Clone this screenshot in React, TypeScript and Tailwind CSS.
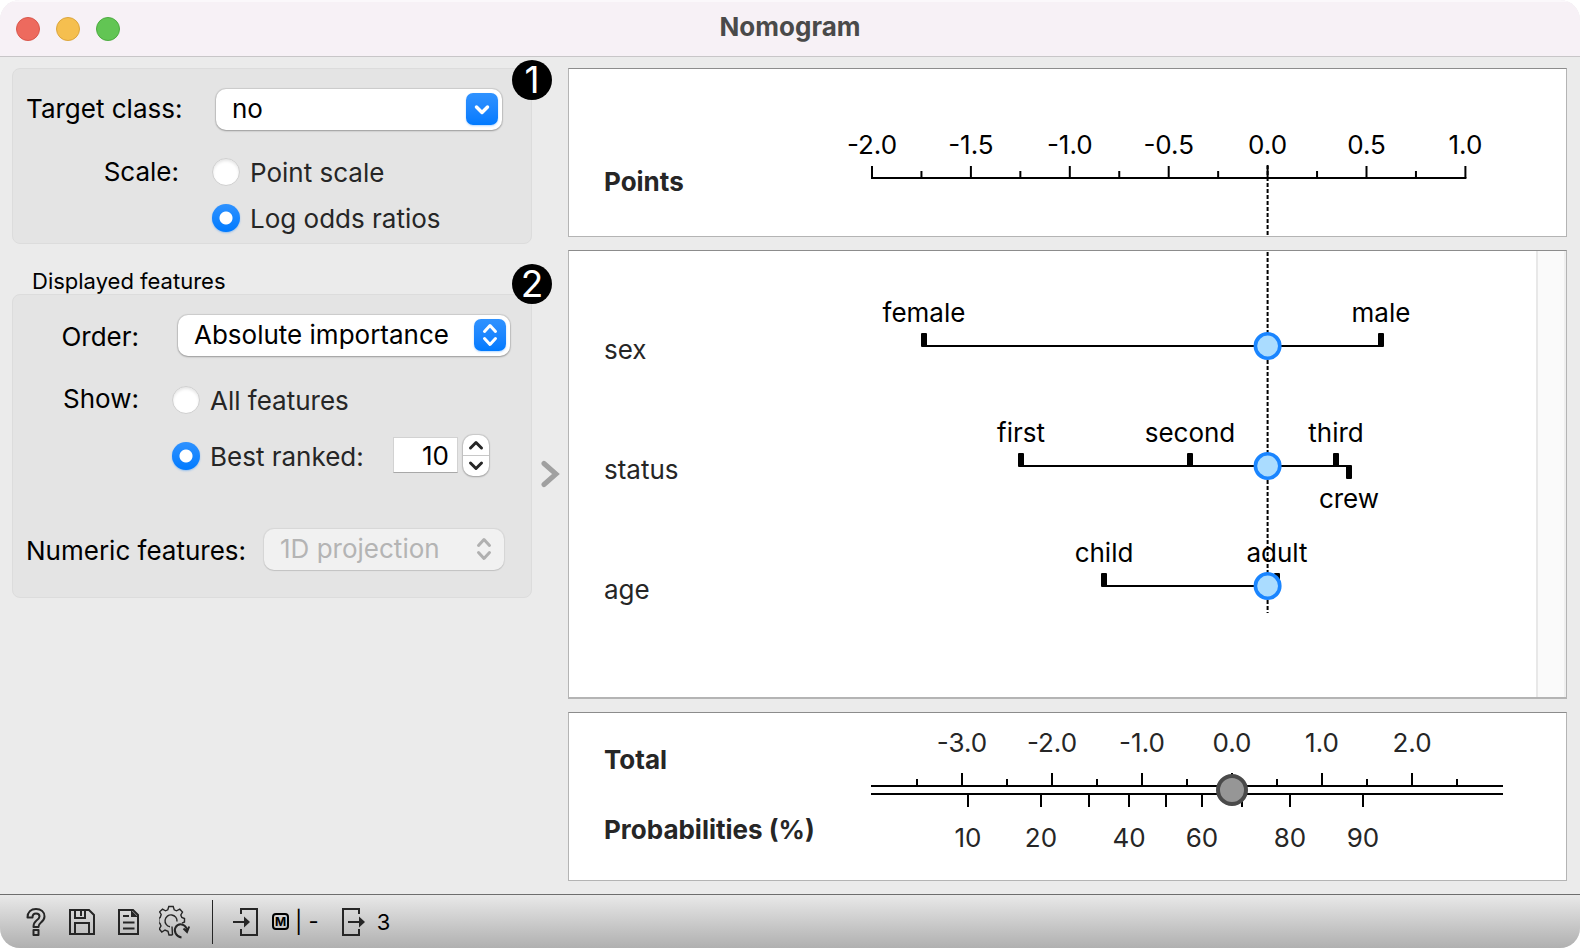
import { useState } from 'react';
import type { ReactNode } from 'react';

type Tick = { at: number; label?: string };
type Level = { at: number; label: string; below?: boolean };
type Feature = { name: string; y: number; levels: Level[] };

const ZERO_X = 698.6;
const UNIT = 197.8;

const pointTicks: Tick[] = [
  { at: -2, label: '-2.0' },
  { at: -1.75 },
  { at: -1.5, label: '-1.5' },
  { at: -1.25 },
  { at: -1, label: '-1.0' },
  { at: -0.75 },
  { at: -0.5, label: '-0.5' },
  { at: -0.25 },
  { at: 0, label: '0.0' },
  { at: 0.25 },
  { at: 0.5, label: '0.5' },
  { at: 0.75 },
  { at: 1, label: '1.0' },
];

const features: Feature[] = [
  {
    name: 'sex',
    y: 95,
    levels: [
      { at: 355, label: 'female' },
      { at: 812, label: 'male' },
    ],
  },
  {
    name: 'status',
    y: 215,
    levels: [
      { at: 452, label: 'first' },
      { at: 621, label: 'second' },
      { at: 767, label: 'third' },
      { at: 780, label: 'crew', below: true },
    ],
  },
  {
    name: 'age',
    y: 335,
    levels: [
      { at: 535, label: 'child' },
      { at: 708, label: 'adult' },
    ],
  },
];

const totalTicks: Tick[] = [
  { at: 348 },
  { at: 393, label: '-3.0' },
  { at: 438 },
  { at: 483, label: '-2.0' },
  { at: 528 },
  { at: 573, label: '-1.0' },
  { at: 618 },
  { at: 663, label: '0.0' },
  { at: 708 },
  { at: 753, label: '1.0' },
  { at: 798 },
  { at: 843, label: '2.0' },
  { at: 888 },
];

const probabilityTicks: Tick[] = [
  { at: 399, label: '10' },
  { at: 472, label: '20' },
  { at: 520 },
  { at: 560, label: '40' },
  { at: 597 },
  { at: 633, label: '60' },
  { at: 673 },
  { at: 721, label: '80' },
  { at: 794, label: '90' },
];

function PointsChart() {
  const x = (v: number) => ZERO_X + v * UNIT;
  return (
    <svg className="block h-full w-full text-[26px]" role="img" aria-label="Points scale">
      <text x="35" y="122" className="fill-[#262626] font-bold">Points</text>
      <path d={`M${x(-2) - 1} 109H${x(1) + 1}`} stroke="#000" strokeWidth="2" />
      {pointTicks.map((t) => (
        <g key={t.at}>
          <path d={`M${x(t.at)} 109V${t.label ? 97 : 102}`} stroke="#000" strokeWidth="2" />
          {t.label && <text x={x(t.at)} y="85" textAnchor="middle">{t.label}</text>}
        </g>
      ))}
      <path d={`M${x(0)} 96V166`} stroke="#000" strokeWidth="2" strokeDasharray="4 2" />
    </svg>
  );
}

function FeaturesChart() {
  return (
    <svg className="block h-full min-w-0 flex-1 text-[26px]" role="img" aria-label="Feature contributions">
      {features.map((f) => (
        <g key={f.name}>
          <text x="35" y={f.y + 13} className="fill-[#262626]">{f.name}</text>
          <path
            d={`M${f.levels[0].at - 2} ${f.y}H${f.levels[f.levels.length - 1].at + 2}`}
            stroke="#000"
            strokeWidth="2"
          />
          {f.levels.map((l) => (
            <g key={l.label}>
              <rect x={l.at - 3} y={l.below ? f.y - 1 : f.y - 13} width="6" height="14" rx="1" />
              <text x={l.at} y={l.below ? f.y + 42 : f.y - 24} textAnchor="middle">{l.label}</text>
            </g>
          ))}
        </g>
      ))}
      <path d={`M${ZERO_X} 1V362`} stroke="#000" strokeWidth="2" strokeDasharray="4 2" />
      {features.map((f) => (
        <circle key={f.name} cx={ZERO_X} cy={f.y} r="12.2" fill="#aadcff" stroke="#1a85ff" strokeWidth="3.6" />
      ))}
    </svg>
  );
}

function TotalChart() {
  return (
    <svg className="block h-full w-full fill-[#262626] text-[26px]" role="img" aria-label="Total and probabilities">
      <text x="35" y="56" className="font-bold">Total</text>
      <text x="35" y="126" className="font-bold">Probabilities (%)</text>
      <path d="M302 73H934M302 81H934" stroke="#000" strokeWidth="2" />
      {totalTicks.map((t) => (
        <g key={t.at}>
          <path d={`M${t.at} 73V${t.label ? 60 : 66}`} stroke="#000" strokeWidth="2" />
          {t.label && <text x={t.at} y="39" textAnchor="middle">{t.label}</text>}
        </g>
      ))}
      {probabilityTicks.map((t) => (
        <g key={t.at}>
          <path d={`M${t.at} 81V94`} stroke="#000" strokeWidth="2" />
          {t.label && <text x={t.at} y="134" textAnchor="middle">{t.label}</text>}
        </g>
      ))}
      <circle cx="663" cy="77" r="14" fill="#969696" stroke="#4a4a4a" strokeWidth="4" />
    </svg>
  );
}

function UpDown({ stroke }: { stroke: string }) {
  return (
    <svg width="32" height="32" fill="none" stroke={stroke} strokeWidth="3" strokeLinecap="round" strokeLinejoin="round">
      <path d="M10.5 12.5L16 6.5L21.5 12.5M10.5 19.5L16 25.5L21.5 19.5" />
    </svg>
  );
}

function Badge({ children }: { children: ReactNode }) {
  return (
    <span className="absolute -right-[21px] flex size-10 items-center justify-center rounded-full bg-black text-[37px] text-white">
      {children}
    </span>
  );
}

const radioClass =
  'size-7 shrink-0 appearance-none rounded-full border border-[#cfcfcf] bg-white shadow-[inset_0_2px_3px_rgba(0,0,0,0.10)] checked:border-0 checked:bg-[radial-gradient(circle,#fff_0,#fff_6px,transparent_7px),linear-gradient(#2f92ff,#007aff)] checked:shadow-[0_1px_2px_rgba(0,122,255,0.35)]';

const selectClass =
  'h-[41px] w-full appearance-none rounded-[10px] bg-white pb-0.5 pl-4 text-black shadow-[0_0_1px_1px_rgba(0,0,0,0.10),0_1px_2px_rgba(0,0,0,0.25)] disabled:bg-[#f1f1f1] disabled:text-[#b4b4b4] disabled:opacity-100 disabled:shadow-[0_0_1px_1px_rgba(0,0,0,0.06),0_1px_1px_rgba(0,0,0,0.10)]';

const arrowClass =
  'pointer-events-none absolute top-1 right-1 size-8 rounded-[7px] bg-gradient-to-b from-[#2f92ff] to-[#007aff] shadow-[0_1px_2px_rgba(0,122,255,0.3)]';

const panelClass = 'border border-[#b4b4b4] border-t-[#8c8c8c] bg-white overflow-hidden';
const groupClass = 'relative rounded-[8px] border border-[#dcdcdc] bg-[#e4e4e4]';

export default function App() {
  const [scale, setScale] = useState('log');
  const [show, setShow] = useState('best');
  const [count, setCount] = useState(10);

  return (
    <div className="h-screen bg-white font-['Inter','Liberation_Sans',sans-serif]">
      <div className="flex h-full flex-col overflow-hidden rounded-[20px] bg-[#ebebeb] text-[26px] leading-8 text-black">
        <header className="grid h-[57px] shrink-0 grid-cols-[1fr_auto_1fr] items-center border-t-2 border-b border-t-[#fbf8fb] border-b-[#c8c6c8] bg-[#f7f1f6] px-4">
          <div className="flex gap-4">
            <button aria-label="Close" className="size-6 rounded-full border border-[#d9574c] bg-[#ed6a5e]" />
            <button aria-label="Minimize" className="size-6 rounded-full border border-[#dba53c] bg-[#f5bf4f]" />
            <button aria-label="Zoom" className="size-6 rounded-full border border-[#4dab40] bg-[#62c554]" />
          </div>
          <h1 className="pb-1 text-[26px] leading-8 font-bold text-[#4a4a4a]">Nomogram</h1>
        </header>

        <main className="flex min-h-0 flex-1 pt-[11px] pr-[13px] pb-[13px] pl-3">
          <div className="w-[520px] shrink-0">
            <section className={`${groupClass} pt-5 pb-0.5 pl-[13px]`}>
              <div className="absolute -top-[9px] right-0"><Badge>1</Badge></div>
              <div className="grid grid-cols-[153px_1fr] gap-x-[33px]">
                <label htmlFor="target" className="self-center pb-0.5 text-right whitespace-nowrap">Target class:</label>
                <div className="relative mr-[29px] ml-1">
                  <select id="target" className={selectClass} defaultValue="no">
                    <option value="no">no</option>
                    <option value="yes">yes</option>
                  </select>
                  <span className={arrowClass}>
                    <svg width="32" height="32" fill="none" stroke="#fff" strokeWidth="3.5" strokeLinecap="round" strokeLinejoin="round">
                      <path d="M10.5 14L16 19.5L21.5 14" />
                    </svg>
                  </span>
                </div>
              </div>
              <div role="radiogroup" aria-labelledby="scale" className="mt-[19px] grid grid-cols-[153px_1fr] gap-x-[33px]">
                <span id="scale" className="flex h-[46px] items-center justify-end">Scale:</span>
                <div>
                  <label className="flex h-[46px] items-center gap-2.5 text-[#262626]">
                    <input type="radio" name="scale" className={radioClass} checked={scale === 'point'} onChange={() => setScale('point')} />
                    <span className="pt-0.5">Point scale</span>
                  </label>
                  <label className="flex h-[46px] items-center gap-2.5 text-[#262626]">
                    <input type="radio" name="scale" className={radioClass} checked={scale === 'log'} onChange={() => setScale('log')} />
                    <span className="pt-0.5">Log odds ratios</span>
                  </label>
                </div>
              </div>
            </section>

            <h2 className="mt-6 pl-5 text-[22px] leading-[26px]">Displayed features</h2>
            <section className={`${groupClass} pt-5 pb-[27px] pl-[13px]`}>
              <div className="absolute -top-[31px] right-0"><Badge>2</Badge></div>
              <div className="grid grid-cols-[113px_1fr] gap-x-[33px]">
                <label htmlFor="order" className="self-center pt-0.5 text-right">Order:</label>
                <div className="relative mr-[21px] ml-1.5">
                  <select id="order" className={selectClass} defaultValue="abs">
                    <option value="abs">Absolute importance</option>
                    <option value="name">Name</option>
                  </select>
                  <span className={arrowClass}><UpDown stroke="#fff" /></span>
                </div>
              </div>
              <div role="radiogroup" aria-labelledby="show" className="mt-4 grid grid-cols-[113px_1fr] gap-x-[33px]">
                <span id="show" className="flex h-14 items-center justify-end pb-0.5">Show:</span>
                <div>
                  <label className="flex h-14 items-center gap-2.5 text-[#262626]">
                    <input type="radio" name="show" className={radioClass} checked={show === 'all'} onChange={() => setShow('all')} />
                    <span className="pt-0.5">All features</span>
                  </label>
                  <div className="flex h-14 items-center justify-between pr-[42px]">
                    <label className="flex items-center gap-2.5 text-[#262626]">
                      <input type="radio" name="show" className={radioClass} checked={show === 'best'} onChange={() => setShow('best')} />
                      <span className="pt-0.5">Best ranked:</span>
                    </label>
                    <div className="flex items-center gap-[5px] pb-0.5">
                      <input
                        aria-label="Number of ranked features"
                        className="h-9 w-[65px] border border-[#d2d2d2] border-b-[#a8a8a8] bg-white pr-2 text-right"
                        value={count}
                        onChange={(e) => setCount(Number(e.target.value) || 0)}
                      />
                      <div className="flex h-[41px] w-[26px] flex-col divide-y divide-[#c8c8c8] overflow-hidden rounded-[10px] bg-white shadow-[0_0_1px_1px_rgba(0,0,0,0.12),0_1px_2px_rgba(0,0,0,0.2)]">
                        <button aria-label="Increase" className="flex-1" onClick={() => setCount(count + 1)}>
                          <svg width="26" height="20" fill="none" stroke="#262626" strokeWidth="3" strokeLinecap="round" strokeLinejoin="round">
                            <path d="M7.5 13L13 7.5L18.5 13" />
                          </svg>
                        </button>
                        <button aria-label="Decrease" className="flex-1" onClick={() => setCount(Math.max(0, count - 1))}>
                          <svg width="26" height="20" fill="none" stroke="#262626" strokeWidth="3" strokeLinecap="round" strokeLinejoin="round">
                            <path d="M7.5 7L13 12.5L18.5 7" />
                          </svg>
                        </button>
                      </div>
                    </div>
                  </div>
                </div>
              </div>
              <div className="mt-[45px] flex items-center gap-[18px] pr-[27px]">
                <label htmlFor="numeric" className="pt-0.5 whitespace-nowrap">Numeric features:</label>
                <div className="relative flex-1">
                  <select id="numeric" className={selectClass} disabled>
                    <option>1D projection</option>
                  </select>
                  <span className="pointer-events-none absolute top-1 right-1"><UpDown stroke="#b0b0b0" /></span>
                </div>
              </div>
            </section>
          </div>

          <div className="flex w-9 shrink-0 items-center justify-center pb-0.5">
            <button aria-label="Toggle controls">
              <svg width="20" height="28" fill="none" stroke="#a0a0a0" strokeWidth="5" strokeLinecap="round">
                <path d="M4 3.5L16 14L4 24.5" strokeLinejoin="miter" />
              </svg>
            </button>
          </div>

          <div className="flex min-w-0 flex-1 flex-col gap-[13px]">
            <section className={`${panelClass} h-[169px] shrink-0`}><PointsChart /></section>
            <section className={`${panelClass} flex min-h-0 flex-1 border-b-2`}>
              <FeaturesChart />
              <div className="w-[30px] shrink-0 border-r-2 border-l-2 border-r-[#efefef] border-l-[#e8e8e8] bg-[#fafafa]" />
            </section>
            <section className={`${panelClass} h-[169px] shrink-0`}><TotalChart /></section>
          </div>
        </main>

        <footer className="flex h-[54px] shrink-0 items-center border-t border-[#6e6e6e] bg-gradient-to-b from-[#e9e9e9] to-[#b0b0b0] pl-[25px] text-[22px]">
          <div className="flex items-center gap-[18px]">
            <button aria-label="Help">
              <svg width="24" height="30" viewBox="0 0 24 30" fill="none" stroke="#262626" strokeWidth="2" strokeLinejoin="round">
                <path d="M2.500 10.500C2.500 5 6 2 11 2C16 2 19.500 5 19.500 9.500C19.500 12.500 17.500 14.500 15.500 16C13.800 17.300 13.500 18 13.500 20H8.500C8.500 16.500 9.500 15 11.500 13.500C13.500 12 14.500 11 14.500 9.500C14.500 7.500 13 6.500 11 6.500C8.500 6.500 7.500 8 7.500 10.500ZM8.500 23H13.500V28H8.500Z" />
              </svg>
            </button>
            <button aria-label="Save">
              <svg width="30" height="30" viewBox="0 0 30 30" fill="none" stroke="#262626" strokeWidth="2">
                <path d="M3 3H22L27 8V27H3ZM8 3V11H18V3M14 4V9M8 27V16H22V27" />
              </svg>
            </button>
            <button aria-label="Report">
              <svg width="26" height="30" viewBox="0 0 26 30" fill="none" stroke="#262626" strokeWidth="2">
                <path d="M4 3H18L23 8V27H4ZM8 9H14M8 15.500H19.500M8 21.500H19.500" />
                <path d="M16 3V10H23Z" fill="#262626" stroke="none" />
              </svg>
            </button>
            <button aria-label="Reset settings">
              <svg width="33" height="34" viewBox="1 0 33 34" fill="none" stroke="#262626" strokeWidth="1.400">
                <g transform="translate(-1 0)">
                  <path d="M15.500 30L12 30L11 26.300L8 25L4.800 27L2.300 24L4 21L3 18.500L1.800 17.500V13.500L3.200 12.500L4.200 9.500L2.600 6.800L5.500 4.200L8.500 5.800L10.800 4.800L11.800 1.500H16.200L17.200 4.800L19.500 5.800L22.800 4.200L25.500 7L23.800 10L24.800 12.500L27.500 13.500V17L25 18.200" />
                  <path d="M13 21.800A6 6 0 1 1 20 16.500M15.500 30L15 21.500" />
                  <path d="M24.500 32.500C19 31.500 16.500 26 18.500 22.500C21 18 28.500 18 30 25M26.500 23.500L30 27L32.200 21.500" strokeWidth="2" />
                </g>
              </svg>
            </button>
          </div>
          <div className="ml-5 h-11 w-px bg-[#262626]" />
          <div className="ml-5 flex items-center">
            <svg width="27" height="30" viewBox="0 0 27 30" fill="none" stroke="#262626" strokeWidth="2">
              <path d="M8 7V2H24V28H8V22M0 15H12" />
              <path d="M11 9.500L17 15L11 20.500Z" fill="#262626" stroke="none" />
            </svg>
            <span className="ml-3 flex size-[17px] items-center justify-center rounded-[4px] border-2 border-black text-[12px] leading-none font-bold">M</span>
            <span className="ml-1.5 whitespace-pre">| -</span>
            <svg className="ml-[22px]" width="26" height="30" viewBox="0 0 26 30" fill="none" stroke="#262626" strokeWidth="2">
              <path d="M18 7V2H2V28H18V22M7 15H20" />
              <path d="M18 9.500L24 15L18 20.500Z" fill="#262626" stroke="none" />
            </svg>
            <span className="ml-2.5">3</span>
          </div>
        </footer>
      </div>
    </div>
  );
}
